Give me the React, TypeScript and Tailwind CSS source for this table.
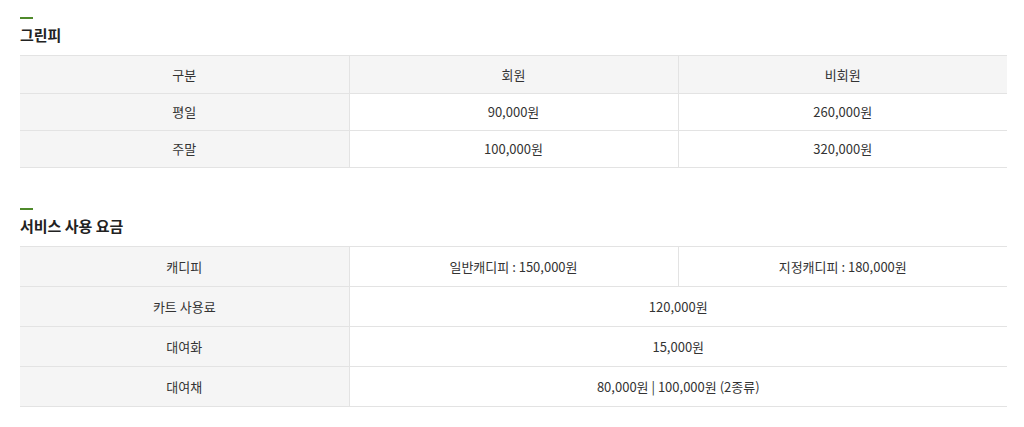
import React from 'react';

const greenFee = [
  { label: '평일', member: '90,000원', guest: '260,000원' },
  { label: '주말', member: '100,000원', guest: '320,000원' },
];

function SectionTitle({ children }: { children: React.ReactNode }) {
  return (
    <div>
      <div className="w-[13px] h-[2px] bg-[#4f8a2b]" />
      <h2 className="mt-[5px] text-[15px] leading-[22px] font-bold text-[#222]">{children}</h2>
    </div>
  );
}

export default function App() {
  const th = 'bg-[#f5f5f5] font-normal text-center';
  const td = 'bg-white text-center';
  return (
    <div
      className="min-h-screen bg-white pl-[20px] pr-[17px] pt-[17px] text-[13px] text-[#333]"
      style={{ fontFamily: '"Noto Sans CJK KR", "Noto Sans", sans-serif' }}
    >
      <SectionTitle>그린피</SectionTitle>
      <table className="mt-[9px] w-full table-fixed border-collapse">
        <colgroup>
          <col className="w-1/3" />
          <col className="w-1/3" />
          <col className="w-1/3" />
        </colgroup>
        <thead>
          <tr className="h-[38px] border-t border-b border-[#e3e3e3]">
            <th className={th}>구분</th>
            <th className={`${th} border-l border-[#e3e3e3]`}>회원</th>
            <th className={`${th} border-l border-[#e3e3e3]`}>비회원</th>
          </tr>
        </thead>
        <tbody>
          {greenFee.map((r) => (
            <tr key={r.label} className="h-[37px] border-b border-[#e3e3e3]">
              <th className={th}>{r.label}</th>
              <td className={`${td} border-l border-[#e3e3e3]`}>{r.member}</td>
              <td className={`${td} border-l border-[#e3e3e3]`}>{r.guest}</td>
            </tr>
          ))}
        </tbody>
      </table>

      <div className="mt-[40px]">
        <SectionTitle>서비스 사용 요금</SectionTitle>
      </div>
      <table className="mt-[9px] w-full table-fixed border-collapse">
        <colgroup>
          <col className="w-1/3" />
          <col className="w-1/3" />
          <col className="w-1/3" />
        </colgroup>
        <tbody>
          <tr className="h-[40px] border-t border-b border-[#e3e3e3]">
            <th className={th}>캐디피</th>
            <td className={`${td} border-l border-[#e3e3e3]`}>일반캐디피 : 150,000원</td>
            <td className={`${td} border-l border-[#e3e3e3]`}>지정캐디피 : 180,000원</td>
          </tr>
          <tr className="h-[40px] border-b border-[#e3e3e3]">
            <th className={th}>카트 사용료</th>
            <td colSpan={2} className={`${td} border-l border-[#e3e3e3]`}>120,000원</td>
          </tr>
          <tr className="h-[40px] border-b border-[#e3e3e3]">
            <th className={th}>대여화</th>
            <td colSpan={2} className={`${td} border-l border-[#e3e3e3]`}>15,000원</td>
          </tr>
          <tr className="h-[40px] border-b border-[#e3e3e3]">
            <th className={th}>대여채</th>
            <td colSpan={2} className={`${td} border-l border-[#e3e3e3]`}>80,000원 | 100,000원 (2종류)</td>
          </tr>
        </tbody>
      </table>
    </div>
  );
}
